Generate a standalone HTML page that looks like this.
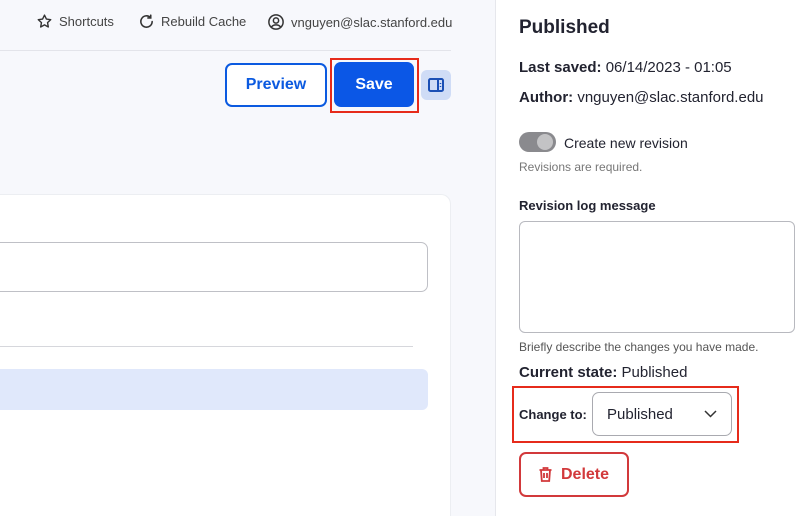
<!DOCTYPE html>
<html style="width:812px;height:516px;overflow:hidden"><head><style>
*{box-sizing:border-box;margin:0;padding:0}
body{width:812px;height:516px;overflow:hidden;position:relative;background:#f7f8fc;font-family:"Liberation Sans",sans-serif;color:#222330}
.a{position:absolute}
.top{font-size:13px;color:#444;display:flex;align-items:center;gap:6px}
</style></head><body>
<div class="a top" style="left:36px;top:13px"><svg width="17" height="17" viewBox="0 0 24 24" fill="none" stroke="#333" stroke-width="2" stroke-linejoin="round"><path d="M12 3l2.7 5.6 6.1.8-4.5 4.2 1.1 6.1L12 16.8 6.6 19.7l1.1-6.1L3.2 9.4l6.1-.8z"/></svg>Shortcuts</div>
<div class="a top" style="left:138px;top:13px"><svg width="17" height="17" viewBox="0 0 24 24" fill="none" stroke="#333" stroke-width="2.2" stroke-linecap="round"><path d="M20 12a8 8 0 1 1-2.4-5.7"/><path d="M18 3v4h-4"/></svg>Rebuild Cache</div>
<div class="a top" style="left:267px;top:13px"><svg width="18" height="18" viewBox="0 0 24 24" fill="none" stroke="#333" stroke-width="2"><circle cx="12" cy="12" r="9.5"/><circle cx="12" cy="10" r="3.5"/><path d="M6 18.5c3-3.5 9-3.5 12 0"/></svg>vnguyen@slac.stanford.edu</div>
<div class="a" style="left:0;top:50px;width:451px;height:1px;background:#e3e4ea"></div>
<div class="a" style="left:225px;top:63px;width:102px;height:44px;border:2px solid #0b5ae0;border-radius:7px;background:#fff;color:#0b5ae0;font-size:16px;font-weight:bold;text-align:center;line-height:40px">Preview</div>
<div class="a" style="left:330px;top:58px;width:89px;height:55px;border:2px solid #e62b1b"></div>
<div class="a" style="left:334px;top:62px;width:80px;height:45px;border-radius:7px;background:#0b57e6;color:#fff;font-size:16px;font-weight:bold;text-align:center;line-height:45px">Save</div>
<div class="a" style="left:421px;top:70px;width:30px;height:30px;border-radius:6px;background:#cfdcf6"><svg style="position:absolute;left:6px;top:6px" width="18" height="18" viewBox="0 0 18 18" fill="none" stroke="#1a4fb5" stroke-width="2"><rect x="2" y="3" width="14" height="12" rx="1.5"/><path d="M11 3v12"/><path d="M13.5 7v1M13.5 10v1" stroke-width="1.5"/></svg></div>
<div class="a" style="left:-10px;top:194px;width:461px;height:322px;background:#fff;border:1px solid #eceef2;border-bottom:none;border-radius:10px 10px 0 0"></div>
<div class="a" style="left:-10px;top:242px;width:438px;height:50px;border:1px solid #bfc0c6;border-radius:7px;background:#fff"></div>
<div class="a" style="left:0;top:346px;width:413px;height:1px;background:#d6d7dc"></div>
<div class="a" style="left:-10px;top:369px;width:438px;height:41px;background:#e0e8fb;border-radius:6px"></div>
<div class="a" style="left:495px;top:0;width:317px;height:516px;background:#fff;border-left:1px solid #e6e7ec"></div>
<div class="a" style="left:519px;top:17px;font-size:19px;font-weight:bold">Published</div>
<div class="a" style="left:519px;top:59px;font-size:15px"><b>Last saved:</b> 06/14/2023 - 01:05</div>
<div class="a" style="left:519px;top:89px;font-size:15px"><b>Author:</b> vnguyen@slac.stanford.edu</div>
<div class="a" style="left:519px;top:132px;width:37px;height:20px;border-radius:10px;background:#8a8a8e"><div style="position:absolute;left:18px;top:2px;width:16px;height:16px;border-radius:50%;background:#c3c3c5"></div></div>
<div class="a" style="left:564px;top:135px;font-size:14px">Create new revision</div>
<div class="a" style="left:519px;top:160px;font-size:12px;color:#777">Revisions are required.</div>
<div class="a" style="left:519px;top:198px;font-size:13px;font-weight:bold">Revision log message</div>
<div class="a" style="left:519px;top:221px;width:276px;height:112px;border:1px solid #b8b9bf;border-radius:6px"></div>
<div class="a" style="left:519px;top:340px;font-size:12px;color:#555">Briefly describe the changes you have made.</div>
<div class="a" style="left:519px;top:364px;font-size:15px"><b>Current state:</b> Published</div>
<div class="a" style="left:512px;top:386px;width:227px;height:57px;border:2px solid #e62b1b"></div>
<div class="a" style="left:519px;top:407px;font-size:13px;font-weight:bold">Change to:</div>
<div class="a" style="left:592px;top:392px;width:140px;height:44px;border:1px solid #a9aab0;border-radius:7px;font-size:15px;padding:13px 0 0 14px">Published<svg style="position:absolute;right:14px;top:17px" width="13" height="8" viewBox="0 0 13 8" fill="none" stroke="#333" stroke-width="1.5"><path d="M1 1l5.5 5.5L12 1"/></svg></div>
<div class="a" style="left:519px;top:452px;width:110px;height:45px;border:2px solid #d2393b;border-radius:7px;color:#d2393b;font-size:16px;font-weight:bold;line-height:41px;padding-left:40px">Delete<svg style="position:absolute;left:18px;top:13px" width="13" height="15" viewBox="0 0 13 15" fill="none" stroke="#d2393b" stroke-width="1.8"><path d="M0.5 3h12M4.5 3V1h4v2M2 3l.8 11h7.4L11 3M5 6v5M8 6v5"/></svg></div>
</body></html>
